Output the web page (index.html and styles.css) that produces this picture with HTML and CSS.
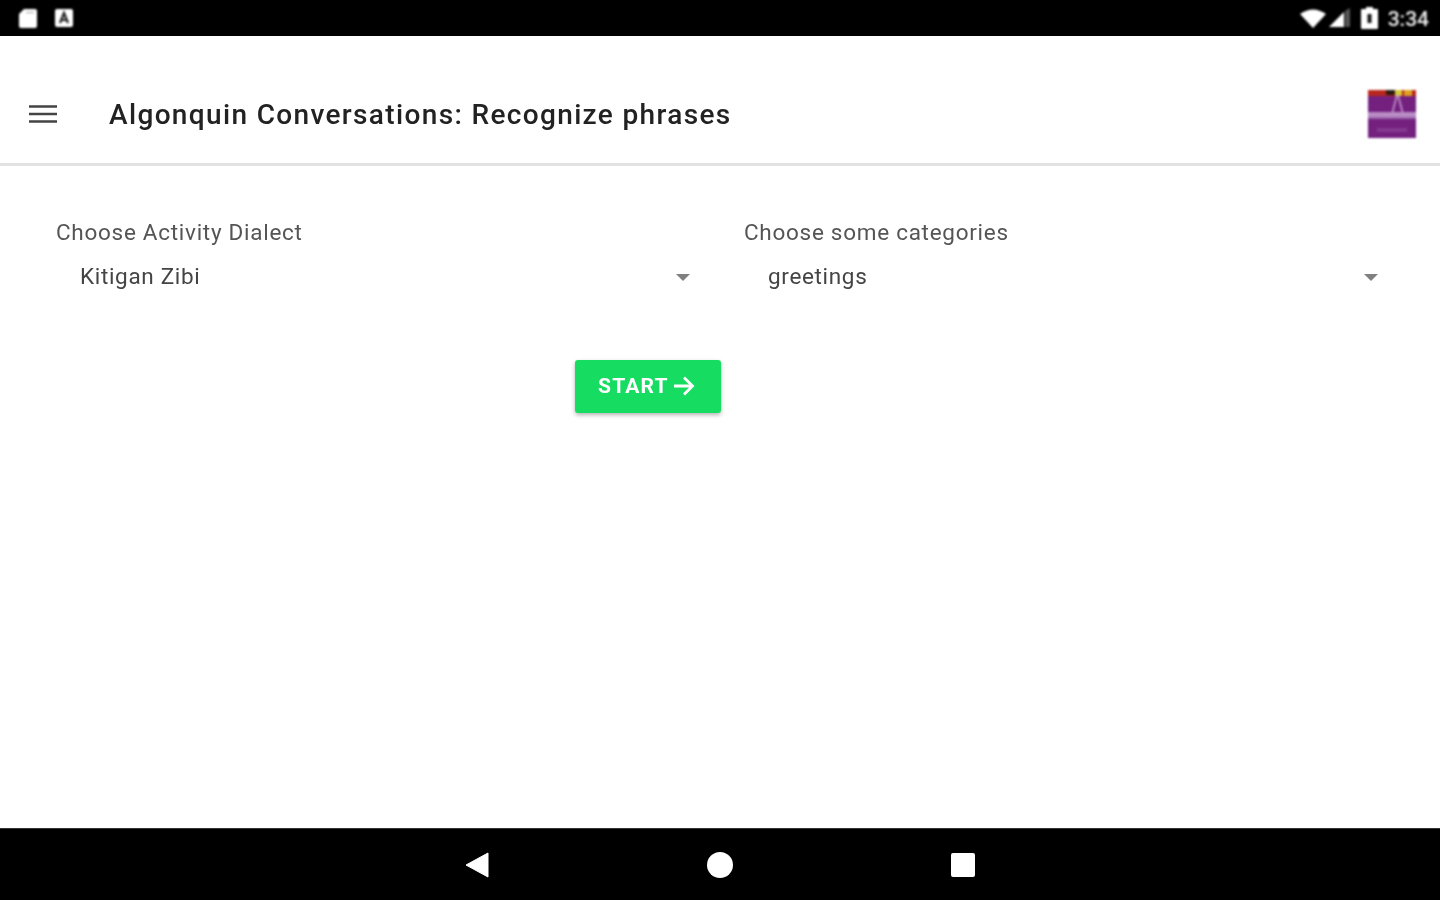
FILE: index.html
```html
<!DOCTYPE html>
<html lang="en">
<head>
<meta charset="utf-8">
<title>Algonquin Conversations</title>
<link rel="stylesheet" href="styles.css">
</head>
<body>
<div class="screen">
  <header class="status-bar">
    <div class="status-left">
      <svg class="icon-sd" width="22" height="24" viewBox="0 0 22 24"><path d="M7 3h11a2 2 0 0 1 2 2v15a2 2 0 0 1-2 2H4a2 2 0 0 1-2-2V8z" fill="#fff"/><path d="M9 6.500h8" stroke="#bbb" stroke-width="1.500"/></svg>
      <svg class="icon-a" width="18" height="18" viewBox="0 0 18 18"><rect width="18" height="18" rx="2" fill="#fff"/><path d="M5 14l4-10 4 10M6.500 11h5" stroke="#222" stroke-width="2.200" fill="none"/></svg>
    </div>
    <div class="status-right">
      <svg class="icon-wifi" width="28" height="20" viewBox="0 0 28 20"><path d="M0 6Q13-3 26 6L13 20z" fill="#fff"/></svg>
      <svg class="icon-signal" width="22" height="20" viewBox="0 0 22 20"><path d="M0 19L15 4v15z" fill="#fff"/><path d="M16 3l5-3v19h-5z" fill="#555"/></svg>
      <svg class="icon-batt" width="17" height="24" viewBox="0 0 17 24"><path d="M5 1h7v2h4a1 1 0 0 1 1 1v18a1 1 0 0 1-1 1H1a1 1 0 0 1-1-1V4a1 1 0 0 1 1-1h4z" fill="#fff"/><path d="M6.500 8h4v9h-4z" fill="#111"/></svg>
      <span class="clock">3:34</span>
    </div>
  </header>

  <div class="app-bar">
    <svg class="menu-icon" width="28" height="20" viewBox="0 0 28 20"><path d="M0 2.500h28M0 10h28M0 17.500h28" stroke="#444" stroke-width="2.600"/></svg>
    <h1 class="title">Algonquin Conversations: Recognize phrases</h1>
    <svg class="logo" width="48" height="48" viewBox="0 0 48 48">
      <rect width="48" height="48" fill="#74207f"/>
      <rect width="48" height="6" fill="#b8261c"/>
      <rect x="18" width="9" height="5" fill="#2a1a10"/>
      <rect x="27" width="7" height="6" fill="#d8c838"/>
      <rect x="36" width="8" height="6" fill="#e0a020"/>
      <path d="M29 5L24 24M30 5l5 19" stroke="#c9a0d0" stroke-width="1.500" fill="none"/>
      <rect y="22" width="48" height="5" fill="#b98cc6"/>
      <rect y="27" width="48" height="2" fill="#9a64aa"/>
      <rect x="9" y="38" width="30" height="4" fill="#843a90"/>
    </svg>
  </div>

  <main class="content">
    <div class="fields">
      <div class="field">
        <label class="field-label">Choose Activity Dialect</label>
        <div class="select"><span>Kitigan Zibi</span><i class="caret"></i></div>
      </div>
      <div class="field">
        <label class="field-label">Choose some categories</label>
        <div class="select"><span>greetings</span><i class="caret"></i></div>
      </div>
    </div>
    <div class="action-col">
      <button class="start" type="button">START
        <svg width="22" height="22" viewBox="0 0 22 22"><path d="M1 11h18M11 2.500L19.500 11 11 19.500" stroke="#fff" stroke-width="2.800" fill="none"/></svg>
      </button>
    </div>
  </main>

  <footer class="nav-bar">
    <svg width="24" height="26" viewBox="0 0 24 26"><path d="M1 13L23 1v24z" fill="#fff" stroke="#fff" stroke-linejoin="round"/></svg>
    <svg width="26" height="26" viewBox="0 0 26 26"><circle cx="13" cy="13" r="13" fill="#fff"/></svg>
    <svg width="24" height="24" viewBox="0 0 24 24"><rect width="24" height="24" rx="2" fill="#fff"/></svg>
  </footer>
</div>
</body>
</html>
```

FILE: styles.css
```css
* { box-sizing: border-box; }
html, body { margin: 0; height: 100%; }
body { background: #fff; font-family: Roboto, "Liberation Sans", sans-serif; overflow: hidden; }
.screen { width: 1440px; height: 900px; display: flex; flex-direction: column; }

.status-bar {
  height: 36px; background: #000; color: #fff;
  display: flex; justify-content: space-between; align-items: center;
  padding: 0 11px 0 17px; flex: none;
}
.status-left, .status-right { display: flex; align-items: center; filter: blur(.8px); }
.status-left { gap: 16px; }
.status-right { gap: 0; }
.icon-signal { margin: 0 10px 0 1px; }
.clock { font-size: 21px; font-weight: 500; margin: 2px 0 0 10px; color: #eee; }

.app-bar {
  height: 130px; flex: none; display: flex; align-items: center;
  padding: 28px 24px 0 29px;
  border-bottom: 3px solid #e2e2e2;
}
.menu-icon { filter: blur(.5px); flex: none; }
.title {
  margin: 2px 0 0 52px; flex: 1;
  font-size: 28px; font-weight: 500; line-height: 1;
  letter-spacing: 1.35px; color: #222; filter: blur(.7px);
}
.logo { filter: blur(1.2px); flex: none; }

.content { flex: 1; padding: 50px 0 0 32px; }
.fields { display: grid; grid-template-columns: 688px 688px; }
.field { padding: 0 30px 0 24px; }
.field-label { display: block; font-size: 22.500px; line-height: 32px; letter-spacing: .72px; color: #555; filter: blur(.7px); }
.select {
  display: flex; justify-content: space-between; align-items: center;
  height: 56px; padding: 0 0 0 24px;
  font-size: 22.500px; letter-spacing: .67px; color: #444;
}
.select span { filter: blur(.7px); }
.caret {
  width: 0; height: 0; margin-top: 2px;
  border: 7px solid transparent; border-top: 7px solid #808080; border-bottom: 0;
  filter: blur(.5px);
}
.action-col { width: 1232px; display: flex; justify-content: center; margin-top: 56px; }
.start {
  display: flex; align-items: center; gap: 4px;
  width: 146px; height: 53px; padding: 0 0 2px 23px;
  background: #17dc62; color: #fff; border: 0; border-radius: 3px;
  font-family: inherit; font-size: 21px; font-weight: 700; letter-spacing: 1.2px;
  box-shadow: 0 2px 4px rgba(0,0,0,.3);
  filter: blur(.5px);
}
.nav-bar {
  height: 72px; flex: none; background: #000;
  border-top: 1px solid #333;
  display: flex; justify-content: center; align-items: center; gap: 218px;
}
.nav-bar svg { filter: blur(.5px); }
```
